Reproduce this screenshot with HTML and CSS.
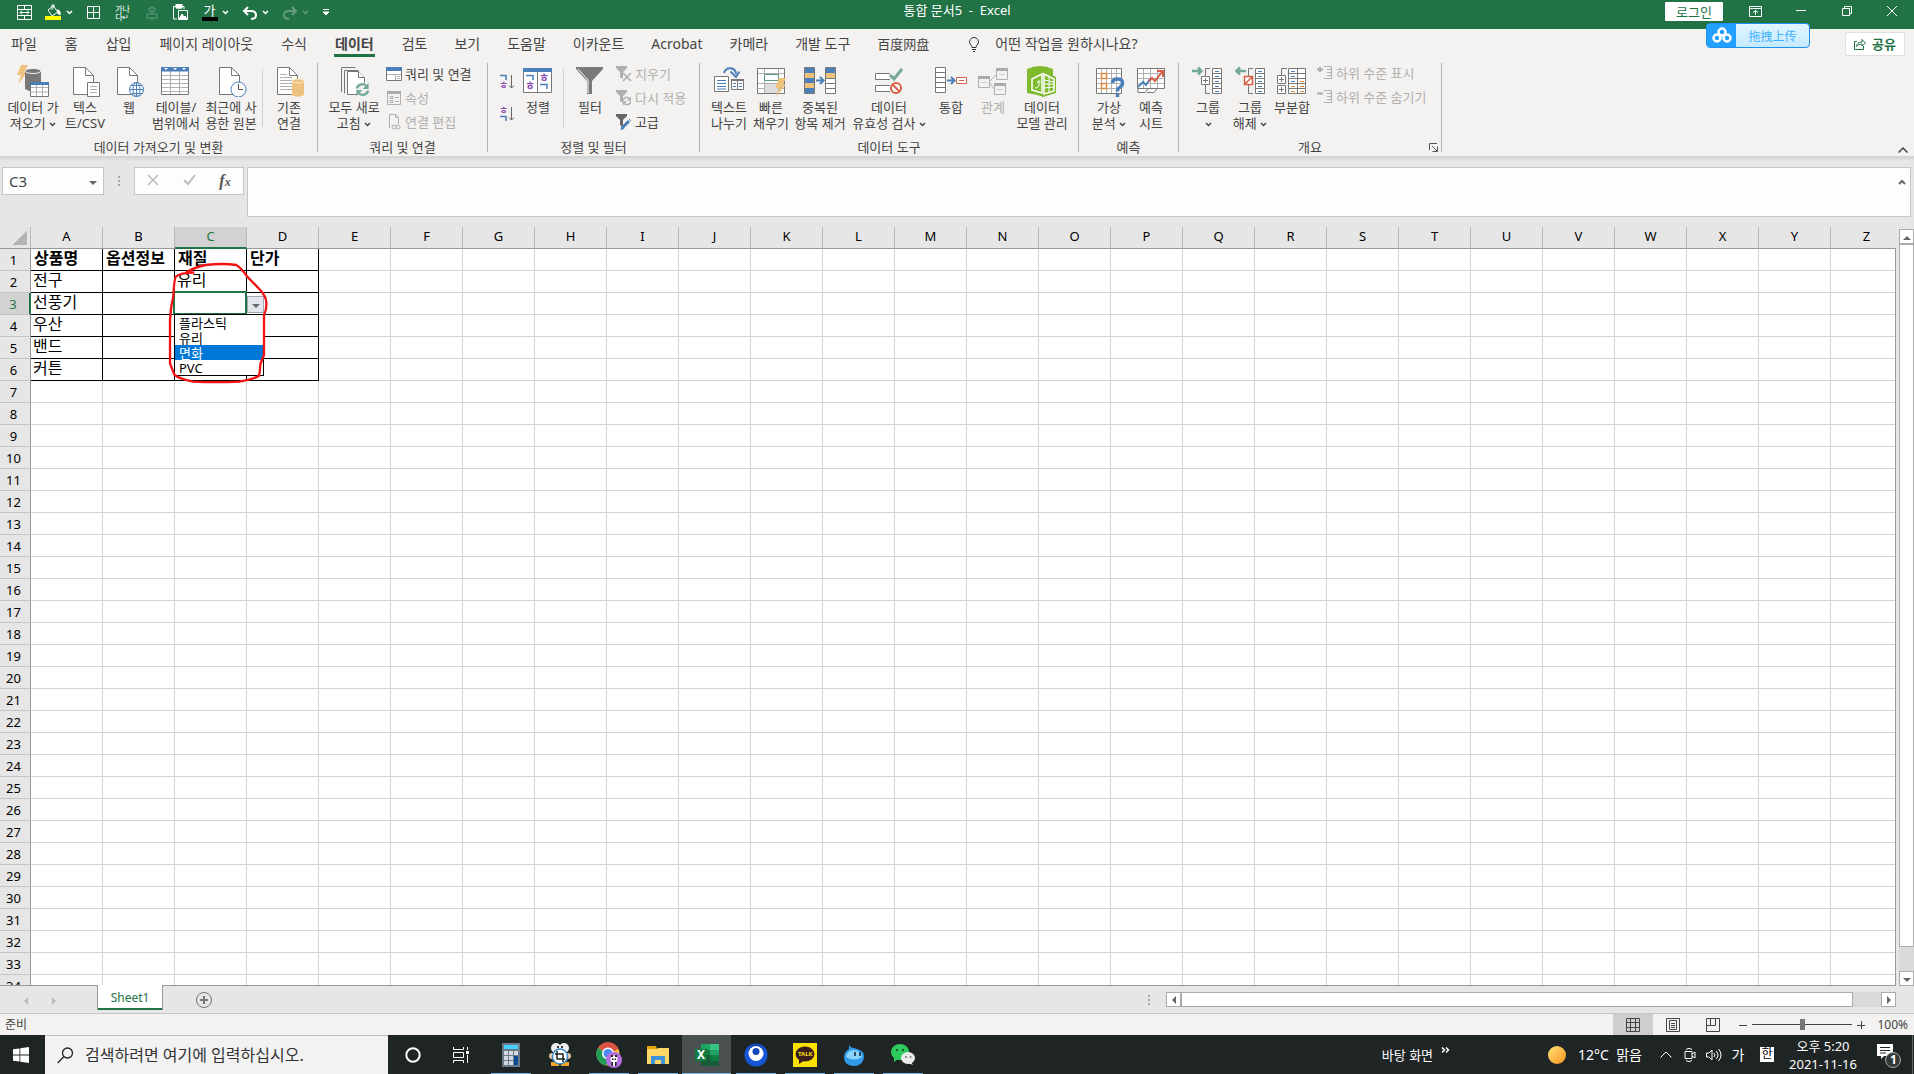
FILE: index.html
```
<!DOCTYPE html>
<html lang="ko">
  <head>
    <meta charset="UTF-8" />
    <meta name="viewport" content="width=device-width, initial-scale=1.0" />
    <title>통합 문서5 - Excel</title>
    <link rel="stylesheet" href="styles.css" />
  </head>
  <body>
    <svg class="defs" aria-hidden="true">
      <symbol id="chev" viewBox="0 0 7 5"><path d="M1 1l2.500 2.500L6 1" fill="none" stroke="currentColor" stroke-width="1.500" /></symbol>
      <symbol id="page" viewBox="0 0 32 32"><path d="M4.500 2.500h12l8 8v19h-20z" fill="#fff" stroke="#777" /><path d="M16.500 2.500v8h8" fill="none" stroke="#777" /></symbol>
      <symbol id="bolt" viewBox="0 0 12 19"><path d="M4 0h7L8 6h3L1 19l3-9H0z" fill="#edc27c" /></symbol>
      <symbol id="refresh" viewBox="0 0 16 16"><path d="M2 7a6 6 0 0 1 10-3M14 9a6 6 0 0 1-10 3" fill="none" stroke="currentColor" stroke-width="2.500" /><path d="M14.500 1v6.500H8zM1.500 15V8.500H8z" fill="currentColor" /></symbol>
      <symbol id="funnel" viewBox="0 0 16 16"><path d="M0 0h11v2L7 6v7l-3-2V6L0 2z" fill="currentColor" /></symbol>
    </svg>

    <header class="titlebar">
      <div class="qat">
        <button class="qat-btn" aria-label="병합"><svg width="16" height="16" viewBox="0 0 16 16"><path d="M.5 .5h14v14H.5zM.5 4.500h14M.5 10.500h14M7.500 .5v4M7.500 10.500v4M3 7.500h9M5 5.500l-2 2 2 2M10 5.500l2 2-2 2" /></svg></button>
        <button class="qat-btn wide" aria-label="채우기 색"><svg width="17" height="17" viewBox="0 0 17 17"><path d="M3 6l5-4 5 6-6 4zM7 6V1h2v3" /><path d="M12 6q4 0 3 5-3-1-3-5z" fill="#fff" /><path d="M0 12h16v4H0z" fill="#ff0" stroke="none" /></svg><svg width="7" height="5"><use href="#chev" /></svg></button>
        <button class="qat-btn" aria-label="테두리"><svg width="14" height="14" viewBox="0 0 14 14"><path d="M.5 .5h12v12H.5zM6.500 0v13M0 6.500h13" /></svg></button>
        <button class="qat-btn tiny" aria-label="줄 바꿈">가나<br />다↵</button>
        <button class="qat-btn dim" aria-label="가운데 맞춤"><svg width="12" height="16" viewBox="0 0 12 16"><path d="M3 3h6v3H3zM1 9h10v4H1zM6 1v2M6 6v3M6 13v2" /></svg></button>
        <button class="qat-btn" aria-label="붙여넣기"><svg width="17" height="17" viewBox="0 0 17 17"><path d="M5 15H1.500V2.500H12V5M4.500 1h5v3h-5zM6.500 6.500h9v9h-9z" /><path d="M7 15l3-5 2 3 1-1 2 3zM4 0h6v4H4z" fill="#fff" stroke="none" /></svg></button>
        <button class="qat-btn wide" aria-label="글꼴 색"><span class="font-color">가</span><svg width="7" height="5"><use href="#chev" /></svg></button>
        <button class="qat-btn wide" aria-label="실행 취소"><svg width="16" height="14" viewBox="0 0 16 14"><path d="M2 5h7q5 0 5 4t-5 4M6 1L2 5l4 4" stroke-width="2" /></svg><svg width="7" height="5"><use href="#chev" /></svg></button>
        <button class="qat-btn wide dim" aria-label="다시 실행"><svg width="16" height="14" viewBox="0 0 16 14"><path d="M14 5H7Q2 5 2 9t5 4M10 1l4 4-4 4" stroke-width="2" /></svg><svg width="7" height="5"><use href="#chev" /></svg></button>
        <button class="qat-btn narrow" aria-label="사용자 지정"><svg width="6" height="7" viewBox="0 0 6 7"><path d="M0 .5h6" /><path d="M0 3h6L3 6z" fill="#fff" stroke="none" /></svg></button>
      </div>
      <div class="doc-title">통합 문서5 &nbsp;- &nbsp;Excel</div>
      <div class="window-controls">
        <button class="login">로그인</button>
        <button class="win-btn" aria-label="리본 표시 옵션"><svg width="13" height="11" viewBox="0 0 13 11"><path d="M.5 .5h12v10H.5zM0 2.500h13M6.500 9V4.500M4 6.500l2.500-2 2.500 2" /></svg></button>
        <button class="win-btn" aria-label="최소화"><svg width="10" height="10" viewBox="0 0 10 10"><path d="M0 4.500h10" /></svg></button>
        <button class="win-btn" aria-label="이전 크기로"><svg width="10" height="10" viewBox="0 0 10 10"><path d="M.5 2.500h7v7h-7zM2.500 2V.5h7v7H8" /></svg></button>
        <button class="win-btn" aria-label="닫기"><svg width="10" height="10" viewBox="0 0 10 10"><path d="M0 0l10 10M10 0L0 10" /></svg></button>
      </div>
      <button class="upload">
        <span class="upload-logo"><svg width="20" height="16" viewBox="0 0 20 16"><circle cx="10" cy="5" r="3.500" /><circle cx="5" cy="11" r="3.500" /><circle cx="15" cy="11" r="3.500" /></svg></span>
        <span class="upload-text">拖拽上传</span>
      </button>
    </header>

    <nav class="tabs">
      <button class="tab">파일</button>
      <button class="tab">홈</button>
      <button class="tab">삽입</button>
      <button class="tab">페이지 레이아웃</button>
      <button class="tab">수식</button>
      <button class="tab active">데이터</button>
      <button class="tab">검토</button>
      <button class="tab">보기</button>
      <button class="tab">도움말</button>
      <button class="tab">이카운트</button>
      <button class="tab">Acrobat</button>
      <button class="tab">카메라</button>
      <button class="tab">개발 도구</button>
      <button class="tab cn">百度网盘</button>
      <button class="tab tell-me"><svg width="12" height="17" viewBox="0 0 12 17"><path d="M4 11.500Q4 9.500 2 8a4.500 4.500 0 1 1 8 0q-2 1.500-2 3.500zM4 13.500h4M5 15.500h2" fill="none" stroke="#333" /></svg>어떤 작업을 원하시나요?</button>
      <button class="share"><svg width="12" height="12" viewBox="0 0 12 12"><path d="M3 3.500H.5v8h9V8M2.500 8.500Q3 4 8 4V1.500L11.500 5 8 8V6Q4 6 2.500 8.500z" fill="none" stroke="#217346" /></svg>공유</button>
    </nav>

    <section class="ribbon">
      <div class="group g-get">
        <div class="group-body">
          <button class="big w54"><svg class="ico" viewBox="0 0 32 32"><use href="#bolt" width="12" height="19" /><path d="M8 6v18q6 4 16 2V6z" fill="#777" /><ellipse cx="16" cy="6" rx="8" ry="2.500" fill="#777" stroke="#f3f2f1" /><path d="M13.500 17.500h18v14h-18z" class="ln" /><path d="M14 22.500h17M14 27h17M19.500 20v11M25.500 20v11" class="grid-ln" /><path d="M13 17h19v3H13z" fill="#4a7fb9" /></svg>데이터 가<br />져오기 <svg class="chev"><use href="#chev" /></svg></button>
          <button class="big w50"><svg class="ico" viewBox="0 0 32 32"><use href="#page" /><path d="M18.500 17.500h12v14h-12z" class="ln" /><path d="M21 21.500h7M21 24.500h7M21 27.500h7" class="grid-ln" /></svg>텍스<br />트/CSV</button>
          <button class="big w38"><svg class="ico" viewBox="0 0 32 32"><use href="#page" /><g fill="#fff" stroke="#4a7fb9"><circle cx="23.500" cy="24.500" r="7" /><ellipse cx="23.500" cy="24.500" rx="3.500" ry="7" /><path d="M16.500 24.500h14M23.500 17.500v14M18 20.500h11M18 28.500h11" /></g></svg>웹</button>
          <button class="big w56"><svg class="ico" viewBox="0 0 32 32"><path d="M1.500 2.500h27v27h-27z" class="ln" /><path d="M2 10.500h26M2 14.500h26M2 18.500h26M2 22.500h26M2 26.500h26M10.500 6v23M19.500 6v23" class="grid-ln" /><path d="M1 2h28v4.500H1z" fill="#4a7fb9" /><path d="M4 3h4L6 5zM13 3h4l-2 2zM22 3h4l-2 2z" fill="#fff" /></svg>테이블/<br />범위에서</button>
          <button class="big w54"><svg class="ico" viewBox="0 0 32 32"><use href="#page" /><circle cx="23.500" cy="24.500" r="7.500" fill="#fff" stroke="#4a7fb9" /><path d="M23.500 19v5.500H28" fill="none" stroke="#555" /></svg>최근에 사<br />용한 원본</button>
          <span class="inner-sep"></span>
          <button class="big w44"><svg class="ico" viewBox="0 0 32 32"><use href="#page" /><path d="M7 9.500h7M7 12.500h12M7 15.500h12M7 18.500h12M7 21.500h12M7 24.500h12" class="grid-ln" /><path d="M19 16v14q6 3.500 12 0V16z" fill="#edc27c" /><ellipse cx="25" cy="16" rx="6" ry="2" fill="#edc27c" stroke="#fbe9c6" /></svg>기존<br />연결</button>
        </div>
        <div class="caption">데이터 가져오기 및 변환</div>
      </div>

      <div class="group g-query">
        <div class="group-body">
          <button class="big w56"><svg class="ico" viewBox="0 0 32 32"><path d="M3.500 27V2.500h14M6.500 28.500v-23h14" fill="none" stroke="#777" /><path d="M9.500 6.500h11l6 6v17h-17z" class="ln" /><path d="M20.500 6.500v6h6" class="ln" /><circle cx="25" cy="25" r="7.500" fill="#f3f2f1" /><use href="#refresh" x="17" y="17" width="15" height="15" color="#75a896" /></svg>모두 새로<br />고침 <svg class="chev"><use href="#chev" /></svg></button>
          <div class="small-col">
            <button class="small"><svg width="16" height="16" viewBox="0 0 16 16"><path d="M.5 1.500h15v13H.5z" class="ln" /><path d="M0 1h16v4H0z" fill="#4a7fb9" /><path d="M1 8.500h14M9.500 9v5M11 10.500h3M11 12.500h3" class="grid-ln" /></svg>쿼리 및 연결</button>
            <button class="small" disabled><svg width="16" height="16" viewBox="0 0 16 16"><path d="M1.500 1.500h13v13h-13z" class="dim-ln" /><path d="M1 1h14v3H1z" fill="#aaa" /><path d="M4 6.500h3v2H4zM4 10.500h3v2H4zM9 7.500h4M9 11.500h4" class="dim-ln" /></svg>속성</button>
            <button class="small" disabled><svg width="16" height="16" viewBox="0 0 16 16"><path d="M3.500 14V.5h6l3 3V10M9.500 .5v3h3" class="dim-ln" /><circle cx="8" cy="13" r="2" class="dim-ln" /><circle cx="12" cy="13" r="2" class="dim-ln" /></svg>연결 편집</button>
          </div>
        </div>
        <div class="caption">쿼리 및 연결</div>
      </div>

      <div class="group g-sort">
        <div class="group-body">
          <div class="sort-col">
            <button class="sort" aria-label="오름차순"><svg width="16" height="18" viewBox="0 0 16 18"><path d="M1 2.500h6V7" fill="none" stroke="#4a7fb9" stroke-width="1.500" /><text x="0" y="16" font-size="10" fill="#8b4fb3">ㅎ</text><path d="M12.500 2v13M10 12.500l2.500 2.500 2.500-2.500" fill="none" stroke="#666" /></svg></button>
            <button class="sort" aria-label="내림차순"><svg width="16" height="18" viewBox="0 0 16 18"><text x="0" y="9" font-size="10" fill="#8b4fb3">ㅎ</text><path d="M1 11.500h6V16" fill="none" stroke="#4a7fb9" stroke-width="1.500" /><path d="M12.500 2v13M10 12.500l2.500 2.500 2.500-2.500" fill="none" stroke="#666" /></svg></button>
          </div>
          <button class="big w42"><svg class="ico" viewBox="0 0 32 32"><path d="M1.500 3.500h28v24h-28zM15.500 7v20" class="ln" /><path d="M1 3h29v4H1z" fill="#4a7fb9" /><path d="M4 10.500h7V15M18 19.500h7V24" fill="none" stroke="#4a7fb9" stroke-width="1.500" /><text x="3" y="25" font-size="11" fill="#8b4fb3">ㅎ</text><text x="17" y="17" font-size="11" fill="#8b4fb3">ㅎ</text></svg>정렬</button>
          <span class="inner-sep"></span>
          <button class="big w44"><svg class="ico" viewBox="0 0 32 32"><path d="M2 2h27v2L18 16v13h-5V16L2 4z" fill="#7a7a7a" /><path d="M4 4l10 11v13" fill="none" stroke="#fff" /></svg>필터</button>
          <div class="small-col">
            <button class="small" disabled><svg width="16" height="16" viewBox="0 0 16 16"><use href="#funnel" /><path d="M7 7l8 8M15 7l-8 8" stroke="#aaa" stroke-width="1.500" /></svg>지우기</button>
            <button class="small" disabled><svg width="16" height="16" viewBox="0 0 16 16"><use href="#funnel" /><use href="#refresh" x="6" y="6" width="10" height="10" /></svg>다시 적용</button>
            <button class="small"><svg width="16" height="16" viewBox="0 0 16 16"><use href="#funnel" color="#666" /><path d="M6 14l7-7" stroke="#4a7fb9" stroke-width="3" /><path d="M5 15.500l1-3 2 2zM13 5l2 2" fill="#4a7fb9" stroke="#4a7fb9" /></svg>고급</button>
          </div>
        </div>
        <div class="caption">정렬 및 필터</div>
      </div>

      <div class="group g-tools">
        <div class="group-body">
          <button class="big w42"><svg class="ico" viewBox="0 0 32 32"><path d="M11 8q2-6 8-4.500Q23 5 23 9" fill="none" stroke="#4a7fb9" stroke-width="2" /><path d="M17.500 6.500L23 12l3.500-5.500" fill="none" stroke="#4a7fb9" stroke-width="2" /><path d="M1.500 11.500h14v15h-14zM18.500 14.500h12v10h-12z" class="ln" /><path d="M4 15.500h9M4 18.500h9M4 21.500h9M4 24h9M20 18.500h3M26 18.500h3M20 21.500h3M26 21.500h3" stroke="#4a7fb9" /><path d="M18 14h13v2H18zM24 14h1v11h-1z" fill="#777" /></svg>텍스트<br />나누기</button>
          <button class="big w42"><svg class="ico" viewBox="0 0 32 32"><path d="M2.500 3.500h27v25h-27z" class="ln" /><path d="M3 8.500h26M3 18.500h26M3 23.500h26M9.500 4v24M23.500 4v24" class="grid-ln" /><path d="M10 19h13v9H10z" fill="#ddd" /><path d="M9.500 9.500h14v6h-14z" fill="#fff" stroke="#5a9a82" /><use href="#bolt" x="20" y="13" width="12" height="19" /></svg>빠른<br />채우기</button>
          <button class="big w56"><svg class="ico" viewBox="0 0 32 32"><path d="M.5 2.500h10v26H.5zM21.500 2.500h10v26h-10z" class="ln" /><path d="M1 3h9v5H1zM1 13h9v5H1zM1 23h9v5H1zM22 3h9v5h-9z" fill="#4a7fb9" /><path d="M1 8h9v5H1zM1 18h9v5H1zM22 8h9v5h-9z" fill="#edc27c" /><path d="M22 13.500h9M22 18.500h9M22 23.500h9" stroke="#777" /><path d="M12 15.500h7M16 12l3.500 3.500L16 19" fill="none" stroke="#4a7fb9" stroke-width="2" /></svg>중복된<br />항목 제거</button>
          <button class="big w82"><svg class="ico" viewBox="0 0 32 32"><path d="M17 8.500H2.500v6H17M17 20.500H2.500v6H17" class="ln" /><path d="M17 10l4 4L29 4" fill="none" stroke="#75a896" stroke-width="3" /><circle cx="23" cy="23" r="5" fill="#fff" stroke="#d65f45" stroke-width="2" /><path d="M19.500 19.500l7 7" stroke="#d65f45" stroke-width="2" /></svg>데이터<br />유효성 검사 <svg class="chev"><use href="#chev" /></svg></button>
          <button class="big w42"><svg class="ico" viewBox="0 0 32 32"><path d="M.5 2.500h10v25H.5zM.5 7.500h10M.5 12.500h10M.5 17.500h10M.5 22.500h10" class="ln" /><path d="M12 15.500h7M16 12l3.500 3.500L16 19" fill="none" stroke="#4a7fb9" stroke-width="2" /><path d="M21.500 12.500h10v6h-10zM24 15.500h5" fill="#fff" stroke="#d65f45" /></svg>통합</button>
          <button class="big w42" disabled><svg class="ico" viewBox="0 0 32 32"><path d="M12 17l7-7M12 17l6 8" class="dim-ln" /><path d="M1.500 11.500h11v11h-11zM19.500 3.500h11v11h-11zM17.500 18.500h11v11h-11z" class="dim-ln" /><path d="M1 11h12v3H1zM19 3h12v3H19zM17 18h12v3H17z" fill="#aaa" /><path d="M4 17.500h6M22 9.500h6M20 24.500h6" stroke="#ccc" /></svg>관계</button>
          <button class="big w56"><svg class="ico" viewBox="0 0 32 32"><path d="M1 4q13-6 26 0v24L16 31 1 28z" fill="#7fba2f" /><path d="M4 13l12-8 14 7v16l-13 4-13-5z" fill="#7fba2f" /><path d="M6 14l10-5v19l-10-3zM18 9l10 5v12l-10 3z" fill="none" stroke="#fff" stroke-width="1.500" /><path d="M18 15l10 2M18 19h10M18 23l10-1M23 12v15M9 23q5 0 4-7M11 18l2-2.500 2 2" fill="none" stroke="#fff" /></svg>데이터<br />모델 관리</button>
        </div>
        <div class="caption">데이터 도구</div>
      </div>

      <div class="group g-forecast">
        <div class="group-body">
          <button class="big w44"><svg class="ico" viewBox="0 0 32 32"><path d="M3.500 3.500h25v25h-25z" class="ln" /><path d="M4 8.500h24M4 13.500h24M4 18.500h24M4 23.500h24M8.500 4v24M13.500 4v24M18.500 4v24M23.500 4v24" class="grid-ln" /><path d="M8.500 8.500h5v5h-5zM8.500 18.500h5v5h-5z" fill="#fff" stroke="#e08a3c" stroke-width="1.500" /><path d="M19.500 18q0-4 5-4t5 4q0 3-3 4.500-2 1-2 4M24.500 28.500v3.500" fill="none" stroke="#4a7fb9" stroke-width="3.500" /></svg>가상<br />분석 <svg class="chev"><use href="#chev" /></svg></button>
          <button class="big w40"><svg class="ico" viewBox="0 0 32 32"><path d="M2.500 3.500h27v20h-27zM3 23.500v4h7l3-4M12 27.500h7l3-4" class="ln" /><path d="M3 8.500h26M3 13.500h26M3 18.500h26M8.500 4v19M15.500 4v19M22.500 4v19" class="grid-ln" /><path d="M3 22l5-5 3 3 4-6" fill="none" stroke="#4a7fb9" stroke-width="2" /><path d="M14 16l3-3 3 3 7-9M22 6h6v6" fill="none" stroke="#d65f45" stroke-width="2" /></svg>예측<br />시트</button>
        </div>
        <div class="caption">예측</div>
      </div>

      <div class="group g-outline">
        <div class="group-body">
          <button class="big w42"><svg class="ico" viewBox="0 0 32 32"><path d="M0 6h9M6 2.500L9.500 6 6 9.500" fill="none" stroke="#75a896" stroke-width="2.500" /><path d="M18 3.500h-4.500V11M13.500 20v8.500H18" fill="none" stroke="#777" /><path d="M9.500 11.500h8v8h-8zM11 15.500h5M13.500 13v5M20.500 3.500h9v25h-9zM20.500 8.500h9M20.500 13.500h9M20.500 18.500h9M20.500 23.500h9" class="ln" /><path d="M23 6.500h4M23 11.500h4M23 16.500h4M23 21.500h4M23 26.500h4" stroke="#4a7fb9" /></svg>그룹<br /><svg class="chev"><use href="#chev" /></svg></button>
          <button class="big w42"><svg class="ico" viewBox="0 0 32 32"><path d="M3 6h9M6 2.500L2.500 6 6 9.500" fill="none" stroke="#75a896" stroke-width="2.500" /><path d="M19 3.500h-4.500V11M14.500 20v8.500H19" fill="none" stroke="#777" /><path d="M21.500 3.500h9v25h-9zM21.500 8.500h9M21.500 13.500h9M21.500 18.500h9M21.500 23.500h9" class="ln" /><path d="M10.500 11.500h8v8h-8zM11 19l7-7" fill="#fff" stroke="#d65f45" stroke-width="1.500" /><path d="M24 6.500h4M24 11.500h4M24 16.500h4M24 21.500h4M24 26.500h4" stroke="#4a7fb9" /></svg>그룹<br />해제 <svg class="chev"><use href="#chev" /></svg></button>
          <button class="big w42"><svg class="ico" viewBox="0 0 32 32"><path d="M11 3.500H5.500V10" fill="none" stroke="#777" /><path d="M1.500 10.500h8v8h-8zM3 14.500h5M5.500 12v5M1.500 20.500h8v8h-8zM3 24.500h5M5.500 22v5M12.500 3.500h17v25h-17zM12 8.500h18M12 13.500h18M12 18.500h18M12 23.500h18M21.500 4v24" class="ln" /><path d="M15 6.500h4M15 11.500h4M15 16.500h4" stroke="#4a7fb9" /><path d="M15 21.500h4M15 26.500h4M24 16.500h4M24 21.500h4M24 26.500h4" stroke="#e08a3c" /></svg>부분합</button>
          <div class="small-col">
            <button class="small" disabled><svg width="16" height="16" viewBox="0 0 16 16"><path d="M3 2v5M0 4.500h6" stroke="#aaa" stroke-width="2" /><path d="M7 1.500h8M10 4.500h5M10 7.500h5M10 10.500h5M7 13.500h8M14.500 1v13" class="dim-ln" /></svg>하위 수준 표시</button>
            <button class="small" disabled><svg width="16" height="16" viewBox="0 0 16 16"><path d="M0 4.500h6" stroke="#aaa" stroke-width="2" /><path d="M7 1.500h8M10 4.500h5M10 7.500h5M10 10.500h5M7 13.500h8M14.500 1v13" class="dim-ln" /></svg>하위 수준 숨기기</button>
          </div>
        </div>
        <div class="caption">개요</div>
        <button class="launcher" aria-label="개요 설정"><svg width="9" height="9" viewBox="0 0 9 9"><path d="M.5 7V.5H8M3 3l5 5M8.500 3.500v5h-5" fill="none" stroke="#555" /></svg></button>
      </div>
      <button class="collapse" aria-label="리본 축소"><svg width="10" height="6" viewBox="0 0 10 6"><path d="M.5 5.500L5 1l4.500 4.500" fill="none" stroke="#444" stroke-width="1.500" /></svg></button>
    </section>

    <section class="formula-bar">
      <div class="name-box">
        <input type="text" value="C3" aria-label="이름 상자" />
        <button aria-label="이름 목록"><i class="tri down"></i></button>
      </div>
      <span class="dots"></span>
      <div class="fx-box">
        <button aria-label="취소"><svg width="12" height="12" viewBox="0 0 12 12"><path d="M1 1l10 10M11 1L1 11" fill="none" stroke="#bbb" stroke-width="1.500" /></svg></button>
        <button aria-label="입력"><svg width="13" height="12" viewBox="0 0 13 12"><path d="M1 6l4 4 7-9" fill="none" stroke="#bbb" stroke-width="2" /></svg></button>
        <button class="fx" aria-label="함수 삽입">f<small>x</small></button>
      </div>
      <div class="formula">
        <textarea aria-label="수식 입력줄"></textarea>
        <button aria-label="수식 입력줄 축소"><svg width="8" height="6" viewBox="0 0 8 6"><path d="M1 5l3-3 3 3" fill="none" stroke="#666" stroke-width="2" /></svg></button>
      </div>
    </section>

    <main class="sheet-area">
      <div class="sheet">
        <table class="grid">
          <thead><tr id="col-heads"></tr></thead>
          <tbody id="rows"></tbody>
        </table>
        <svg class="scribble" viewBox="495 294 315 384"><path d="M583 338L560 336Q580 324 616 315Q670 309 709 315Q724 324 741 349L778 387Q800 410 799 430Q800 450 792 465V585L781 612Q780 635 777 647Q760 658 718 665Q650 668 580 665Q535 656 523 644L510 610V480Q512 440 520 408Q523 350 528 350Q540 338 583 338" /></svg>
      </div>
      <div class="vscroll">
        <button aria-label="위로"><i class="tri up"></i></button>
        <div class="thumb"></div>
        <div class="track"></div>
        <button aria-label="아래로"><i class="tri down"></i></button>
      </div>
    </main>

    <section class="sheet-bar">
      <button class="nav-btn" aria-label="이전 시트"><i class="tri left"></i></button>
      <button class="nav-btn" aria-label="다음 시트"><i class="tri right"></i></button>
      <button class="sheet-tab">Sheet1</button>
      <button class="add-sheet" aria-label="새 시트"><svg width="16" height="16" viewBox="0 0 16 16"><circle cx="8" cy="8" r="7.500" fill="none" stroke="#777" /><path d="M8 4v8M4 8h8" stroke="#777" stroke-width="2" /></svg></button>
      <span class="dots"></span>
      <div class="hscroll">
        <button aria-label="왼쪽"><i class="tri left"></i></button>
        <div class="thumb"></div>
        <div class="track"></div>
        <button aria-label="오른쪽"><i class="tri right"></i></button>
      </div>
    </section>

    <section class="status-bar">
      <span class="ready">준비</span>
      <button class="view on" aria-label="기본"><svg width="14" height="14" viewBox="0 0 14 14"><path d="M.5 .5h13v13H.5zM.5 4.500h13M.5 9.500h13M4.500 .5v13M9.500 .5v13" /></svg></button>
      <button class="view" aria-label="페이지 레이아웃"><svg width="14" height="14" viewBox="0 0 14 14"><path d="M.5 .5h13v13H.5zM3.500 2.500h7v9h-7zM5 5.500h4M5 7.500h4M5 9.500h4" /></svg></button>
      <button class="view" aria-label="페이지 나누기"><svg width="14" height="14" viewBox="0 0 14 14"><path d="M.5 .5h13v13H.5zM4.500 .5v7h5v-7M.5 7.500h4" /></svg></button>
      <button class="zoom-btn" aria-label="축소"><svg width="8" height="8" viewBox="0 0 8 8"><path d="M0 4.500h8" stroke="#444" /></svg></button>
      <input class="zoom" type="range" min="0" max="100" value="50" aria-label="확대/축소" />
      <button class="zoom-btn" aria-label="확대"><svg width="8" height="8" viewBox="0 0 8 8"><path d="M0 4.500h8M4.500 0v8" stroke="#444" /></svg></button>
      <span class="percent">100%</span>
    </section>

    <footer class="taskbar">
      <button class="start" aria-label="시작"><svg width="16" height="16" viewBox="0 0 16 16"><path d="M0 2.300L6.500 1.400v6.200H0zM7.300 1.200L16 0v7.600H7.300zM0 8.400h6.500v6.200L0 13.700zM7.300 8.400H16V16l-8.700-1.200z" fill="#fff" /></svg></button>
      <label class="search"><svg width="17" height="17" viewBox="0 0 17 17"><circle cx="10.500" cy="6" r="5" fill="none" stroke="#222" stroke-width="1.300" /><path d="M7 9.500L.7 16" stroke="#222" stroke-width="1.300" /></svg><input type="text" placeholder="검색하려면 여기에 입력하십시오." aria-label="검색" /></label>
      <button class="app plain" aria-label="Cortana"><svg width="16" height="16" viewBox="0 0 16 16"><circle cx="8" cy="8" r="6.700" fill="none" stroke="#fff" stroke-width="2" /></svg></button>
      <button class="app plain" aria-label="작업 보기"><svg width="17" height="16" viewBox="0 0 17 16"><path d="M.5 0v2.500h10V0M.5 5.500h10v5H.5zM.5 16v-2.500h10V16M14.500 0v3M14.500 8v8" fill="none" stroke="#fff" /><path d="M13 4h3v3h-3z" fill="#fff" /></svg></button>
      <button class="app open" aria-label="계산기"><svg width="24" height="24" viewBox="0 0 24 24"><path d="M3 0h18v24H3z" fill="#6c7a87" /><path d="M5 2h14v4H5z" fill="#45d1ff" /><path d="M5 8h4v4H5zM10 8h4v4h-4zM15 8h4v4h-4zM5 13h4v4H5zM10 13h4v4h-4zM5 18h4v4H5zM10 18h4v4h-4z" fill="#d3dbe2" /><path d="M15 13h4v9h-4z" fill="#0a4b94" /></svg></button>
      <button class="app" aria-label="캡처"><svg width="24" height="24" viewBox="0 0 24 24"><circle cx="8" cy="5" r="5" fill="#eee" /><circle cx="16" cy="5" r="5" fill="#eee" /><circle cx="10" cy="4" r="1" /><circle cx="14" cy="4" r="1" /><path d="M4 20h6v2H4zM14 20h6v2h-6z" fill="#f6a623" stroke="#f6a623" stroke-width="2" /><circle cx="4" cy="13" r="3" fill="#d9c9a7" /><circle cx="20" cy="13" r="3" fill="#d9c9a7" /><circle cx="12" cy="13.500" r="7.500" fill="#fff" stroke="#3a8cc8" stroke-width="1.500" /><path d="M9 8v8h8M7 11h8v8" fill="none" stroke="#222" stroke-width="1.500" /></svg></button>
      <button class="app open" aria-label="Chrome"><svg width="26" height="26" viewBox="0 0 26 26"><circle cx="12" cy="12" r="11.500" fill="#f6c344" /><path d="M12 12L2 6A11.500 11.500 0 0 1 22.500 7z" fill="#dd5144" /><path d="M12 12l-1 11.500A11.500 11.500 0 0 1 2 6z" fill="#1f9d57" /><circle cx="12" cy="11.500" r="6" fill="#fff" /><circle cx="12" cy="11.500" r="4.500" fill="#4a8af4" /><circle cx="18" cy="18" r="8" fill="#b36ee0" /><circle cx="18" cy="17" r="3.500" fill="#fff" /><path d="M15.500 20h5v4h-5zM15 13h2v2h-2zM19 13h2v2h-2zM16 16.500h1.500V18H16zM18.500 16.500H20V18h-1.500z" fill="#222" /><path d="M17 20h2v4h-2z" fill="#fff" /></svg></button>
      <button class="app open" aria-label="파일 탐색기"><svg width="24" height="24" viewBox="0 0 24 24"><path d="M1 3h9l1 3H1z" fill="#e5a50a" /><path d="M1 6h10l1-1h11v16H1z" fill="#ffd766" /><path d="M5 21v-8h14v8h-4v-4H9v4z" fill="#3f93d6" /></svg></button>
      <button class="app open current" aria-label="Excel"><svg width="24" height="24" viewBox="0 0 24 24"><path d="M6 1h18v22H6z" fill="#185c37" /><path d="M6 1h9v6H6z" fill="#21a366" /><path d="M15 1h9v6h-9z" fill="#33c481" /><path d="M6 7h9v5H6z" fill="#107c41" /><path d="M15 7h9v5h-9z" fill="#21a366" /><path d="M15 12h9v6h-9z" fill="#107c41" /><path d="M0 6h12v12H0z" fill="#107c41" /><text x="2" y="16" font-size="12" font-weight="700" fill="#fff">X</text></svg></button>
      <button class="app open" aria-label="웨일"><svg width="24" height="24" viewBox="0 0 24 24"><circle cx="12" cy="12" r="11.500" fill="#1556d6" /><path d="M4 8q2-6 8-7 6 1 8 7z" fill="#0d3fa8" /><circle cx="12" cy="10.500" r="7.500" fill="#fff" /><circle cx="12" cy="8.500" r="3.500" fill="#1349b8" /></svg></button>
      <button class="app open" aria-label="카카오톡"><svg width="24" height="24" viewBox="0 0 24 24"><path d="M0 0h24v24H0z" fill="#fae100" /><ellipse cx="12" cy="11" rx="9.500" ry="7.500" fill="#3b1e1e" /><path d="M6 16l0 5 6-4z" fill="#3b1e1e" /><text x="5" y="13" font-size="6" font-weight="700" fill="#fae100">TALK</text></svg></button>
      <button class="app open" aria-label="왕왕"><svg width="24" height="24" viewBox="0 0 24 24"><path d="M7 1q1 4 5 4 11 2 10 10-2 8-10 8-9 0-10-8 0-6 5-9z" fill="#2f9be8" /><path d="M4 14q1-7 8-7 8 1 8 7-8 5-16 0z" fill="#8bd3ff" /><path d="M13 9v4M18 9v4" stroke="#123" stroke-width="1.500" /></svg></button>
      <button class="app open" aria-label="WeChat"><svg width="24" height="24" viewBox="0 0 24 24"><ellipse cx="9" cy="9" rx="9" ry="8" fill="#2ecc5f" /><path d="M3 15v4l4-3z" fill="#2ecc5f" /><circle cx="6" cy="7" r="1.200" fill="#14602c" /><circle cx="12" cy="7" r="1.200" fill="#14602c" /><ellipse cx="17" cy="15" rx="7" ry="6" fill="#ececec" /><path d="M20 19l2 3-5-2z" fill="#ececec" /><circle cx="15" cy="14" r="1" fill="#777" /><circle cx="19.500" cy="14" r="1" fill="#777" /></svg></button>

      <div class="tray">
        <button class="desktop">바탕 화면<svg width="9" height="6" viewBox="0 0 9 6"><path d="M1 .5L3.500 3 1 5.500M5 .5L7.500 3 5 5.500" fill="none" stroke="#fff" stroke-width="1.500" /></svg></button>
        <button class="weather"><i class="sun"></i>12°C&nbsp; 맑음</button>
        <button class="tray-btn" aria-label="숨겨진 아이콘"><svg width="12" height="7" viewBox="0 0 12 7"><path d="M.5 6.500L6 1l5.500 5.500" /></svg></button>
        <button class="tray-btn" aria-label="지금 모임 시작"><svg width="12" height="16" viewBox="0 0 12 16"><path d="M1 4.500h7v7H1zM8 7l3-2v6L8 9M2 2.500Q5 0 8 2.500M2 13.500q3 2.500 6 0" /></svg></button>
        <button class="tray-btn" aria-label="볼륨"><svg width="16" height="14" viewBox="0 0 16 14"><path d="M.5 5v4H3l3 3V2L3 5zM8 5q2 2 0 4M10 3q4 4 0 8M12.500 1q5 6 0 12" /></svg></button>
        <button class="tray-btn ime">가</button>
        <button class="tray-btn"><span class="han">한</span></button>
        <button class="clock">오후 5:20<br />2021-11-16</button>
        <button class="notice" aria-label="알림"><svg width="26" height="26" viewBox="0 0 26 26"><path d="M1 2h16v12H8l-3 3v-3H1z" fill="#fff" /><path d="M4 5.500h10M4 8.500h10M4 11h6" stroke="#1f2424" /><circle cx="17" cy="18" r="7.500" fill="#333838" stroke="#aaa" /><text x="14" y="22" font-size="12" font-weight="700" fill="#fff">1</text></svg></button>
        <span class="peek"></span>
      </div>
    </footer>

    <script src="script.js"></script>
  </body>
</html>
```
FILE: styles.css
```
* {
  box-sizing: border-box;
}
body {
  margin: 0;
  height: 100vh;
  display: flex;
  flex-direction: column;
  overflow: hidden;
  background: #e6e6e6;
  color: #444;
  font-family: "Noto Sans", "Noto Sans CJK KR", sans-serif;
  font-size: 13px;
  line-height: 16px;
}
button,
input,
textarea,
select {
  font: inherit;
  color: inherit;
  border: none;
  background: none;
  padding: 0;
  margin: 0;
  outline: none;
  border-radius: 0;
}
button {
  white-space: nowrap;
  flex-shrink: 0;
}
.defs {
  position: absolute;
  width: 0;
  height: 0;
}
.ln {
  fill: #fff;
  stroke: #777;
}
.grid-ln {
  fill: none;
  stroke: #b0b0b0;
}
.dim-ln {
  fill: none;
  stroke: #b0b0b0;
}

/* title bar */
.titlebar {
  position: relative;
  z-index: 2;
  height: 29px;
  display: flex;
  justify-content: space-between;
  background: #217346;
  color: #fff;
}
.qat {
  flex: 1;
  display: flex;
  align-items: flex-start;
}
.qat-btn {
  width: 29px;
  height: 25px;
  display: flex;
  align-items: center;
  justify-content: center;
  gap: 4px;
}
.qat-btn:first-child {
  margin-left: 10px;
}
.qat-btn path {
  fill: none;
  stroke: #fff;
}
.qat-btn path[fill="#fff"] {
  fill: #fff;
}
.qat-btn path[fill="#ff0"] {
  fill: #ff0;
  stroke: none;
}
.qat-btn.wide {
  width: 40px;
}
.qat-btn.narrow {
  width: 22px;
}
.qat-btn.tiny {
  font-size: 8px;
  line-height: 8px;
  text-align: left;
}
.qat-btn.dim {
  opacity: 0.3;
}
.font-color {
  width: 16px;
  border-bottom: 4px solid #000;
  line-height: 13px;
}
.doc-title {
  line-height: 20px;
}
.window-controls {
  flex: 1;
  display: flex;
  justify-content: flex-end;
  align-items: flex-start;
}
.login {
  width: 58px;
  height: 19px;
  margin: 2px 9px 0 0;
  background: #fff;
  color: #217346;
  border-radius: 1px;
}
.win-btn {
  width: 46px;
  height: 22px;
  display: flex;
  align-items: center;
  justify-content: center;
}
.win-btn path {
  fill: none;
  stroke: #fff;
}
.win-btn:last-child {
  width: 44px;
}
.upload {
  position: absolute;
  top: 23px;
  right: 104px;
  width: 104px;
  height: 25px;
  display: flex;
  border: 1px solid #1e90f0;
  border-radius: 4px;
  overflow: hidden;
  background: linear-gradient(#e2f5ff, #c4eaff);
}
.upload-logo {
  width: 29px;
  height: 23px;
  padding-top: 3px;
  background: #22a0ff;
}
.upload-logo circle {
  fill: none;
  stroke: #fff;
  stroke-width: 2.5;
}
.upload-text {
  flex: 1;
  line-height: 23px;
  font-size: 12px;
  font-family: "Noto Sans CJK SC", sans-serif;
  color: #3fb2ff;
}

/* ribbon tabs */
.tabs {
  display: flex;
  height: 32px;
  padding-right: 9px;
  background: #f3f2f1;
  font-size: 14px;
}
.tab {
  position: relative;
  height: 30px;
  padding: 0 14px;
}
.tab:first-child {
  padding-left: 11px;
}
.tab.active {
  font-weight: 700;
}
.tab.active ~ .tab {
  padding-right: 13px;
}
.tab.active::after {
  content: "";
  position: absolute;
  left: 13px;
  right: 13px;
  bottom: 2px;
  height: 3px;
  background: #217346;
}
.tab.cn {
  font-size: 13px;
  font-family: "Noto Sans CJK SC", sans-serif;
}
.tell-me {
  display: flex;
  align-items: center;
  gap: 15px;
  margin-left: 12px;
}
.share {
  display: flex;
  align-items: center;
  justify-content: center;
  gap: 6px;
  width: 60px;
  height: 24px;
  margin: 3px 0 0 auto;
  background: #fff;
  border: 1px solid #e1dfdd;
  border-radius: 2px;
  color: #217346;
  font-size: 13px;
  font-weight: 700;
}

/* ribbon */
.ribbon {
  display: flex;
  height: 95px;
  padding-top: 2px;
  background: #f3f2f1;
}
.group {
  position: relative;
  height: 89px;
  border-right: 1px solid #b4b2b0;
}
.g-get {
  width: 318px;
}
.g-query {
  width: 170px;
}
.g-sort {
  width: 212px;
}
.g-tools {
  width: 379px;
}
.g-forecast {
  width: 100px;
}
.g-outline {
  width: 263px;
}
.group-body {
  display: flex;
  align-items: flex-start;
  height: 75px;
  padding-left: 8px;
}
.g-get .group-body {
  padding-left: 6px;
}
.g-sort .group-body {
  padding-left: 11px;
}
.caption {
  text-align: center;
  line-height: 18px;
}
.big {
  padding-top: 2px;
  text-align: center;
}
.ico {
  display: block;
  width: 32px;
  height: 32px;
  margin: 0 auto 2px;
}
.chev {
  width: 7px;
  height: 5px;
  vertical-align: middle;
}
.w38 {
  width: 38px;
}
.w40 {
  width: 40px;
}
.w42 {
  width: 42px;
}
.w44 {
  width: 44px;
}
.w50 {
  width: 50px;
}
.w54 {
  width: 54px;
}
.w56 {
  width: 56px;
}
.w82 {
  width: 82px;
}
.inner-sep {
  width: 1px;
  height: 58px;
  margin: 6px 4px 0;
  background: #d2d0ce;
}
.small-col {
  display: flex;
  flex-direction: column;
  margin: -1px 0 0 4px;
}
.small {
  display: flex;
  align-items: center;
  gap: 3px;
  height: 24px;
}
.g-outline .small-col {
  margin-top: -2px;
}
button:disabled {
  color: #b1afad;
}
.sort-col {
  display: flex;
  flex-direction: column;
  gap: 14px;
  padding: 10px 2px 0 0;
}
.sort {
  height: 18px;
}
.g-sort text {
  font-weight: 700;
}
.launcher {
  position: absolute;
  right: 3px;
  bottom: 0;
  line-height: 9px;
}
.collapse {
  margin: auto 6px 3px auto;
  line-height: 6px;
}

/* formula bar */
.formula-bar {
  display: flex;
  align-items: flex-start;
  height: 71px;
  padding: 11px 3px 0 2px;
  background: linear-gradient(#d0d0d0, #e6e6e6 5px);
}
.name-box,
.fx-box,
.formula {
  display: flex;
  background: #fdfdfd;
  border: 1px solid #c6c6c6;
}
.name-box {
  width: 102px;
  height: 28px;
}
.name-box input {
  flex: 1;
  width: 60px;
  padding-left: 6px;
  font-size: 15px;
}
.name-box button {
  width: 20px;
}
.formula-bar .dots {
  margin: 9px 14px 0;
}
.dots {
  width: 2px;
  height: 10px;
  background: repeating-linear-gradient(#a6a6a6 0 2px, transparent 2px 4px);
}
.fx-box {
  width: 110px;
  height: 28px;
}
.fx-box button {
  flex: 1;
}
.fx {
  font: italic 700 16px "Liberation Serif", serif;
  color: #555;
}
.fx small {
  font-size: 12px;
}
.formula {
  flex: 1;
  height: 50px;
  margin-left: 3px;
}
.formula textarea {
  flex: 1;
  resize: none;
}
.formula button {
  width: 16px;
  height: 24px;
}
.tri {
  display: inline-block;
  vertical-align: middle;
  border: 4px solid transparent;
}
.tri.down {
  border-top-color: #666;
  border-bottom: none;
}
.tri.up {
  border-bottom-color: #666;
  border-top: none;
}
.tri.left {
  border-right-color: #666;
  border-left: none;
}
.tri.right {
  border-left-color: #666;
  border-right: none;
}

/* worksheet */
.sheet-area {
  flex: 1;
  min-height: 0;
  display: flex;
}
.sheet {
  position: relative;
  flex: 1;
  overflow: hidden;
  border-bottom: 1px solid #999;
}
.sheet::after {
  content: "";
  position: absolute;
  top: 21px;
  right: 0;
  bottom: 0;
  width: 1px;
  background: #999;
}
.grid {
  table-layout: fixed;
  width: 1903px;
  border-spacing: 0;
  background: #fff;
  color: #000;
}
.grid th,
.grid td {
  height: 22px;
  padding: 0;
  border: solid #d4d4d4;
  border-width: 0 1px 1px 0;
  line-height: 20px;
  white-space: nowrap;
}
.grid th {
  width: 72px;
  background: #e6e6e6;
  font-weight: 400;
}
.grid thead th {
  border-color: #b8b8b8;
  border-bottom-color: #999;
  line-height: 18px;
  vertical-align: top;
}
.grid th.row-head {
  padding-right: 3px;
  border-color: #c4c4c4;
  border-right-color: #999;
}
.grid th.corner {
  width: 31px;
  background: linear-gradient(135deg, transparent 50%, #b4b4b4 50%) 13px 4px / 14px 14px no-repeat #e6e6e6;
}
.grid thead th.on {
  background: #d2d2d2;
  color: #217346;
  border-bottom: 2px solid #217346;
}
.grid th.row-head.on {
  background: #d2d2d2;
  color: #217346;
  border-right: 2px solid #217346;
}
.grid td {
  padding-left: 2px;
  font-size: 16px;
  line-height: 18px;
  vertical-align: top;
}
.grid td.boxed {
  border-color: #000;
}
.grid td.title {
  padding-left: 3px;
  font-weight: 700;
}
.grid td.active {
  position: relative;
}
.grid td.active::after {
  content: "";
  position: absolute;
  inset: -2px -1px -1px -2px;
  border: 2px solid #217346;
  pointer-events: none;
}
.drop-btn {
  position: absolute;
  z-index: 1;
  left: 72px;
  top: 3px;
  width: 17px;
  height: 17px;
  background: #e3e6ec;
  border: 1px solid #a0a5b0;
  line-height: 10px;
}
.options {
  position: absolute;
  z-index: 1;
  left: -1px;
  top: 21px;
  width: 90px;
  height: 62px;
  overflow: hidden;
  background: #fff;
  border: 1px solid #000;
  color: #000;
  font-size: 13px;
}
.options option {
  display: flex;
  align-items: center;
  height: 15px;
  min-height: 15px;
  padding: 0 0 0 4px;
  line-height: 15px;
}
.options option:checked {
  background: #0078d7 linear-gradient(#0078d7, #0078d7);
  color: #fff;
}
.scribble {
  position: absolute;
  z-index: 2;
  left: 165px;
  top: 31px;
  width: 105px;
  height: 128px;
  pointer-events: none;
}
.scribble path {
  fill: none;
  stroke: #f01414;
  stroke-width: 7;
  stroke-linejoin: round;
}
.vscroll {
  display: flex;
  flex-direction: column;
  width: 18px;
  padding: 2px 0 0 3px;
}
.vscroll button,
.hscroll button,
.thumb {
  background: #fff;
  border: 1px solid #ababab;
}
.vscroll button,
.hscroll button {
  width: 15px;
  height: 15px;
  line-height: 8px;
}
.vscroll .thumb {
  flex: 1;
}
.vscroll .track {
  height: 24px;
}
.track {
  background: #dadada;
}

/* sheet tabs */
.sheet-bar {
  display: flex;
  align-items: center;
  height: 28px;
  padding-right: 18px;
  border-bottom: 1px solid #c6c6c6;
}
.nav-btn {
  width: 28px;
  opacity: 0.35;
}
.nav-btn:first-child {
  margin-left: 12px;
}
.sheet-tab {
  position: relative;
  align-self: flex-start;
  width: 66px;
  height: 25px;
  margin: -1px 33px 0 29px;
  background: #fff;
  border: solid #999;
  border-width: 0 1px;
  box-shadow: inset 0 -2px #217346;
  color: #217346;
  font-size: 12px;
}
.add-sheet {
  height: 16px;
}
.sheet-bar .dots {
  margin-left: auto;
}
.hscroll {
  display: flex;
  width: 38.5%;
  height: 15px;
  margin-left: 16px;
}
.hscroll .thumb {
  flex: 1;
}
.hscroll .track {
  width: 28px;
}

/* status bar */
.status-bar {
  display: flex;
  align-items: center;
  height: 21px;
  padding: 0 6px 0 5px;
  background: #f3f2f1;
  font-size: 12px;
}
.ready {
  margin-right: auto;
}
.view {
  width: 40px;
  height: 21px;
  display: flex;
  align-items: center;
  justify-content: center;
}
.view.on {
  background: #d0cecc;
}
.view path {
  fill: none;
  stroke: #444;
}
.zoom-btn {
  width: 8px;
  height: 8px;
  line-height: 8px;
  display: flex;
}
.view + .zoom-btn {
  margin-left: 6px;
}
.zoom {
  appearance: none;
  width: 100px;
  height: 11px;
  margin: 0 5px;
  background: linear-gradient(#444, #444) center / 100% 1px no-repeat;
}
.zoom::-webkit-slider-thumb {
  appearance: none;
  width: 5px;
  height: 11px;
  background: #777;
}
.percent {
  width: 43px;
  text-align: right;
}

/* taskbar */
.taskbar {
  display: flex;
  height: 39px;
  background: #1f2424;
  color: #fff;
}
.start {
  width: 45px;
  padding-right: 3px;
  display: flex;
  align-items: center;
  justify-content: center;
}
.search {
  display: flex;
  align-items: center;
  gap: 11px;
  width: 343px;
  padding-left: 12px;
  background: #f2f2f2;
  border-top: 1px solid #bbb;
}
.search input {
  flex: 1;
  height: 30px;
  font-size: 16px;
}
.search input::placeholder {
  color: #333;
  opacity: 1;
}
.app {
  width: 49px;
  display: flex;
  align-items: center;
  justify-content: center;
}
.app.open {
  background: linear-gradient(#76b9ed, #76b9ed) center bottom / 40px 1px no-repeat;
}
.app.current {
  background: linear-gradient(#76b9ed, #76b9ed) center bottom / 100% 1px no-repeat #4b5050;
}
.tray {
  display: flex;
  align-items: center;
  margin-left: auto;
}
.desktop {
  display: flex;
  gap: 8px;
  margin-right: 98px;
  font-size: 13px;
}
.weather {
  display: flex;
  align-items: center;
  gap: 12px;
  margin-right: 12px;
  font-size: 14px;
}
.sun {
  width: 18px;
  height: 18px;
  border-radius: 50%;
  background: linear-gradient(135deg, #ffe27a, #f7941d);
}
.tray-btn {
  width: 24px;
  display: flex;
  align-items: center;
  justify-content: center;
}
.tray-btn path {
  fill: none;
  stroke: #fff;
}
.ime {
  font-size: 14px;
}
.han {
  width: 15px;
  height: 15px;
  margin-left: 10px;
  background: #fff;
  color: #000;
  font-size: 12px;
  line-height: 14px;
}
.clock {
  width: 98px;
  line-height: 18px;
}
.notice {
  width: 40px;
  height: 26px;
  padding-right: 6px;
}
.peek {
  width: 1px;
  height: 39px;
  margin-right: 1px;
  background: #666;
}
```
FILE: script.js
```
const columns = "ABCDEFGHIJKLMNOPQRSTUVWXYZ".split("");
const rowCount = 34;

const data = [
  ["상품명", "옵션정보", "재질", "단가"],
  ["전구", "", "유리", ""],
  ["선풍기", "", "", ""],
  ["우산", "", "", ""],
  ["밴드", "", "", ""],
  ["커튼", "", "", ""],
];

const materials = ["플라스틱", "유리", "면화", "PVC"];
const active = { row: 3, col: "C" };

const heads = document.getElementById("col-heads");
heads.innerHTML =
  '<th class="corner"></th>' +
  columns
    .map((c) => `<th class="${c === active.col ? "on" : ""}">${c}</th>`)
    .join("");

function cell(row, col, index) {
  const classes = [];
  const inTable = row <= data.length && index < data[0].length;
  let content = "";

  if (inTable) {
    classes.push("boxed");
    content = data[row - 1][index];
    if (row === 1) classes.push("title");
  }
  if (row === active.row && col === active.col) {
    classes.push("active");
    content = `
      <button class="drop-btn" aria-label="목록"><i class="tri down"></i></button>
      <select class="options" size="4" aria-label="재질">
        ${materials
          .map((m) => `<option ${m === "면화" ? "selected" : ""}>${m}</option>`)
          .join("")}
      </select>`;
  }
  return `<td class="${classes.join(" ")}">${content}</td>`;
}

let html = "";
for (let r = 1; r <= rowCount; r++) {
  const on = r === active.row ? " on" : "";
  html += `<tr><th class="row-head${on}">${r}</th>`;
  html += columns.map((c, i) => cell(r, c, i)).join("");
  html += "</tr>";
}
document.getElementById("rows").innerHTML = html;
```
